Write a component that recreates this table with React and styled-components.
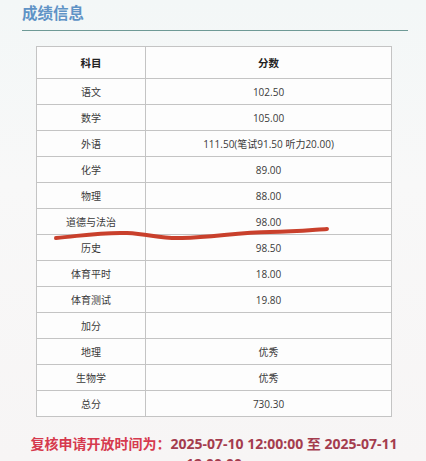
import React from "react";
import styled, { createGlobalStyle } from "styled-components";

const Global = createGlobalStyle`
  html, body { margin: 0; padding: 0; background: #f6f6f6; }
  body { font-family: "Open Sans", "Noto Sans CJK SC", sans-serif; overflow: hidden; }
`;

const Page = styled.div`
  position: relative;
  width: 426px;
  height: 461px;
  overflow: hidden;
  background: linear-gradient(180deg, #f3f7f7 0%, #f8f8f8 40%, #f7f5f5 100%);
`;

const Header = styled.div`
  padding: 0 18px 0 22px;
`;

const Title = styled.h2`
  margin: 0;
  font-size: 15.5px;
  line-height: 24px;
  font-weight: 700;
  color: #5f93c6;
  font-family: "Noto Sans CJK SC", sans-serif;
`;

const Rule = styled.div`
  margin-top: 6px;
  height: 1px;
  background: #6e9a96;
`;

const TableWrap = styled.div`
  padding: 15px 34px 0 36px;
`;

const Table = styled.table`
  width: 356px;
  border-collapse: collapse;
  background: #fdfdfd;
  font-family: "Open Sans", "Noto Sans CJK SC", sans-serif;
  color: #333;
`;

const Th = styled.th`
  border: 1px solid #c4c4c4;
  height: 31px;
  padding: 0;
  font-size: 10.5px;
  font-weight: 700;
  text-align: center;
  width: ${(p) => p.$w || "auto"};
  color: #222;
`;

const Td = styled.td`
  border: 1px solid #c4c4c4;
  height: 25px;
  padding: 0;
  font-size: 10px;
  text-align: center;
  color: #3a3a3a;
`;

const Footer = styled.div`
  margin: 17px 26px 0 28px;
  text-align: center;
  font-size: 14px;
  line-height: 20px;
  font-weight: 700;
  font-family: "Open Sans", "Noto Sans CJK SC", sans-serif;
  white-space: nowrap;
`;

const Lead = styled.span`
  color: #d63a4e;
`;

const Dates = styled.span`
  color: #a43c4e;
`;

const Scribble = styled.svg`
  position: absolute;
  left: 0;
  top: 0;
  pointer-events: none;
`;

const rows = [
  ["语文", "102.50"],
  ["数学", "105.00"],
  ["外语", "111.50(笔试91.50 听力20.00)"],
  ["化学", "89.00"],
  ["物理", "88.00"],
  ["道德与法治", "98.00"],
  ["历史", "98.50"],
  ["体育平时", "18.00"],
  ["体育测试", "19.80"],
  ["加分", ""],
  ["地理", "优秀"],
  ["生物学", "优秀"],
  ["总分", "730.30"],
];

export default function App() {
  return (
    <Page>
      <Global />
      <Header>
        <Title>成绩信息</Title>
        <Rule />
      </Header>
      <TableWrap>
        <Table>
          <thead>
            <tr>
              <Th $w="108px">科目</Th>
              <Th>分数</Th>
            </tr>
          </thead>
          <tbody>
            {rows.map(([k, v]) => (
              <tr key={k}>
                <Td>{k}</Td>
                <Td>{v}</Td>
              </tr>
            ))}
          </tbody>
        </Table>
      </TableWrap>
      <Footer>
        <Lead>复核申请开放时间为：</Lead>
        <Dates>2025-07-10 12:00:00 至 2025-07-11</Dates>
        <br />
        <Dates>12:00:00</Dates>
      </Footer>
      <Scribble width="426" height="461" viewBox="0 0 426 461">
        <path
          d="M56 238 C 80 236, 100 232, 127 233 C 150 234, 160 239, 182 238 C 215 237, 240 232, 270 232 C 295 232, 312 230, 327 229"
          fill="none"
          stroke="#c9402c"
          strokeWidth="4"
          strokeLinecap="round"
        />
      </Scribble>
    </Page>
  );
}
